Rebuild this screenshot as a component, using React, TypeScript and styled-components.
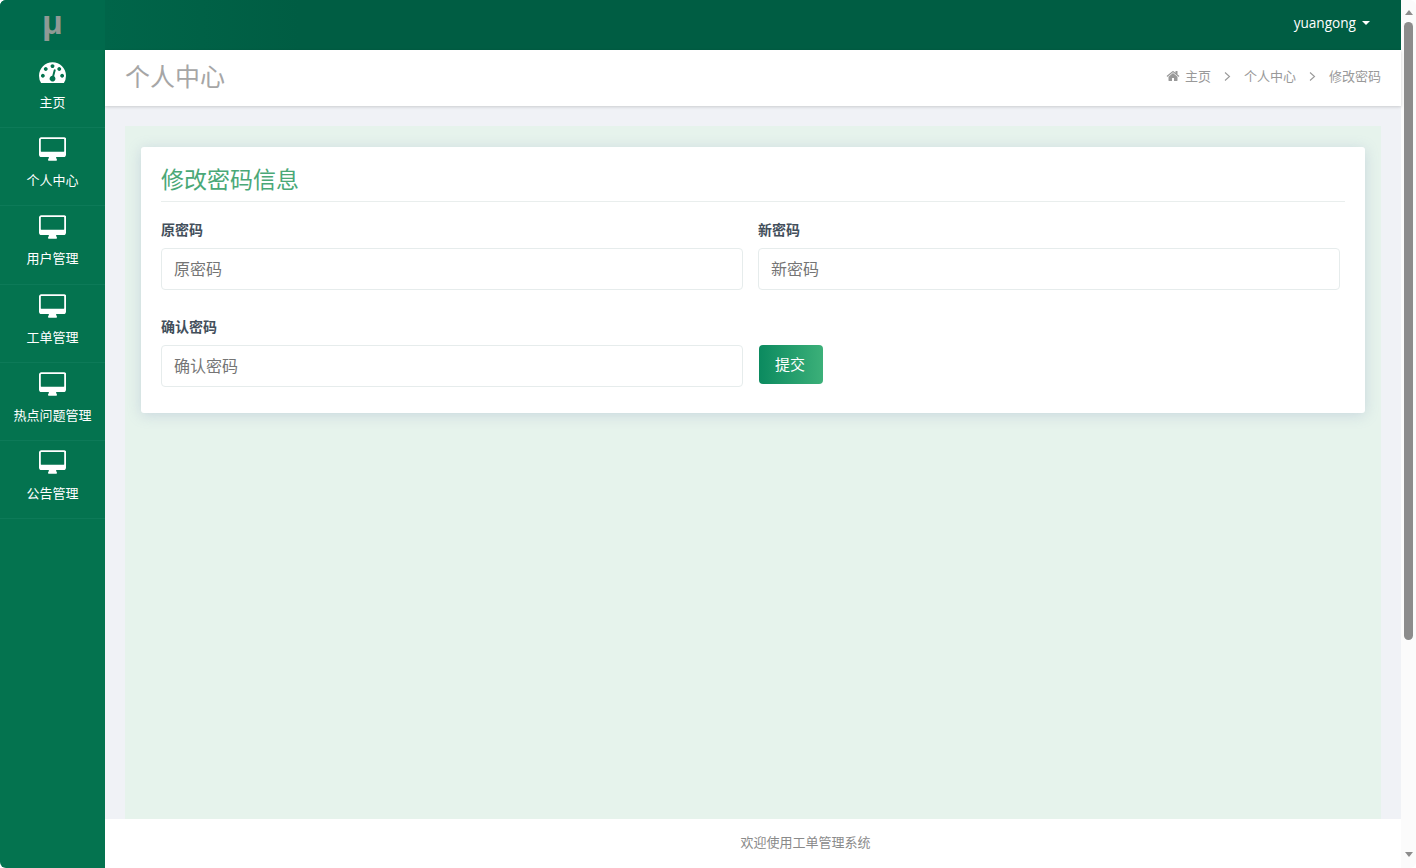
import React from 'react';
import styled, { createGlobalStyle } from 'styled-components';

const GlobalStyle = createGlobalStyle`
  html, body {
    margin: 0;
    padding: 0;
    height: 100%;
    overflow: hidden;
    background: #ffffff;
    font-family: "Open Sans", "Noto Sans CJK SC", sans-serif;
  }
  * {
    box-sizing: border-box;
  }
`;

const Shell = styled.div`
  display: flex;
  height: 868px;
  border-radius: 6px;
  overflow: hidden;
`;

const Sidebar = styled.aside`
  width: 105px;
  flex-shrink: 0;
  background: #04734f;
`;

const Logo = styled.div`
  height: 50px;
  display: flex;
  align-items: center;
  justify-content: center;
  padding-bottom: 5px;
  background: #006a4c;
  color: #8f9a95;
  font-family: "Liberation Sans", sans-serif;
  font-size: 34px;
  font-weight: 700;
`;

const NavItem = styled.a`
  display: flex;
  flex-direction: column;
  align-items: center;
  height: 78.2px;
  padding-top: 9px;
  border-bottom: 1px solid #0d7a58;
  color: #ffffff;
  font-size: 13px;
  line-height: 18px;
  white-space: nowrap;
`;

const NavIcon = styled.svg`
  display: block;
  width: 27px;
  height: 24px;
  margin-bottom: 10px;
  fill: #ffffff;
`;

const Main = styled.div`
  flex: 1;
  min-width: 0;
  display: flex;
  flex-direction: column;
  background: #f0f2f6;
`;

const TopBar = styled.header`
  height: 50px;
  flex-shrink: 0;
  display: flex;
  align-items: center;
  justify-content: flex-end;
  padding: 0 31px 5px 0;
  background: linear-gradient(90deg, #006549 0%, #005d43 15%);
  color: #ffffff;
  font-size: 13.6px;
`;

const UserName = styled.span`
  display: flex;
  align-items: center;
  gap: 6px;
`;

const Caret = styled.i`
  width: 0;
  height: 0;
  border-left: 4px solid transparent;
  border-right: 4px solid transparent;
  border-top: 4px solid #ffffff;
`;

const PageHeader = styled.div`
  height: 56px;
  flex-shrink: 0;
  display: flex;
  align-items: center;
  justify-content: space-between;
  padding: 0 20px 4px;
  background: #ffffff;
  box-shadow: 0 1px 3px rgba(0, 0, 0, 0.16);
  position: relative;
`;

const PageTitle = styled.h1`
  margin: 0;
  color: #a6a6a6;
  font-size: 25px;
  font-weight: 400;
  line-height: 34px;
`;

const Breadcrumb = styled.nav`
  display: flex;
  align-items: center;
  padding-bottom: 2px;
  color: #999999;
  font-size: 13px;
`;

const HomeIcon = styled.svg`
  width: 14px;
  height: 14px;
  margin: 2px 5px 0 1px;
  fill: #999999;
`;

const Chevron = styled.svg`
  width: 7px;
  height: 9px;
  margin: 3px 13px 0;
  fill: none;
  stroke: #999999;
  stroke-width: 1.1;
`;

const Content = styled.main`
  flex: 1;
  margin: 20px 20px 0;
  padding: 21px 16px 0;
  background: #e6f3ec;
`;

const Card = styled.section`
  height: 266px;
  padding: 14px 20px 0;
  background: #ffffff;
  border-radius: 3px;
  box-shadow: 0 2px 14px rgba(130, 150, 190, 0.3);
`;

const CardTitle = styled.h2`
  margin: 0 0 18px;
  height: 41px;
  border-bottom: 1px solid #e9eeed;
  color: #4aa877;
  font-size: 23px;
  font-weight: 400;
  line-height: 36px;
`;

const FormGrid = styled.form`
  display: grid;
  grid-template-columns: 582px 582px;
  column-gap: 15px;
  row-gap: 27px;
  align-items: end;
`;

const Field = styled.label`
  display: block;
`;

const FieldLabel = styled.span`
  display: block;
  margin-bottom: 8px;
  color: #434f5b;
  font-size: 14px;
  font-weight: 700;
  line-height: 20px;
`;

const TextInput = styled.input`
  display: block;
  width: 100%;
  height: 42px;
  padding: 0 12px;
  border: 1px solid #e6ecec;
  border-radius: 4px;
  background: #ffffff;
  color: #555555;
  font-family: inherit;
  font-size: 16px;
  outline: none;

  &::placeholder {
    color: #757575;
    opacity: 1;
  }
`;

const SubmitButton = styled.button`
  width: 64px;
  height: 39px;
  margin: 0 0 3px 1px;
  padding: 0 2px 2px 0;
  border: none;
  border-radius: 4px;
  background: linear-gradient(90deg, #0b8a5f 0%, #3cb079 100%);
  color: #ffffff;
  font-family: inherit;
  font-size: 15px;
`;

const Footer = styled.footer`
  height: 49px;
  flex-shrink: 0;
  display: flex;
  align-items: center;
  justify-content: center;
  padding: 0 0 4px 105px;
  background: #ffffff;
  color: #8a8a8a;
  font-size: 13px;
`;

const Scrollbar = styled.div`
  width: 15px;
  flex-shrink: 0;
  display: flex;
  flex-direction: column;
  align-items: center;
  background: #fbfbfb;
`;

const ScrollArrow = styled.i<{ $down?: boolean }>`
  width: 0;
  height: 0;
  margin: ${({ $down }) => ($down ? 'auto 0 11px' : '10px 0 7px')};
  border-left: 4.5px solid transparent;
  border-right: 4.5px solid transparent;
  border-${({ $down }) => ($down ? 'top' : 'bottom')}: 5px solid #8c8c8c;
`;

const ScrollThumb = styled.div`
  width: 9px;
  height: 618px;
  border-radius: 5px;
  background: #8c8c8c;
`;

const dashboardPath =
  'M384 1216q0-53-37.5-90.5t-90.5-37.5-90.5 37.5-37.5 90.5 37.5 90.5 90.5 37.5 90.5-37.5 37.5-90.5zm192-448q0-53-37.5-90.5t-90.5-37.5-90.5 37.5-37.5 90.5 37.5 90.5 90.5 37.5 90.5-37.5 37.5-90.5zm428 481l101-382q6-26-7.5-48.5t-38.5-29.5-48 6.5-30 39.5l-101 382q-60 5-107 43.5t-63 98.5q-20 77 20 146t117 89 146-20 89-117q16-60-6-117t-72-91zm660-33q0-53-37.5-90.5t-90.5-37.5-90.5 37.5-37.5 90.5 37.5 90.5 90.5 37.5 90.5-37.5 37.5-90.5zm-640-640q0-53-37.5-90.5t-90.5-37.5-90.5 37.5-37.5 90.5 37.5 90.5 90.5 37.5 90.5-37.5 37.5-90.5zm448 192q0-53-37.5-90.5t-90.5-37.5-90.5 37.5-37.5 90.5 37.5 90.5 90.5 37.5 90.5-37.5 37.5-90.5zm320 448q0 261-141 483-19 29-54 29h-1402q-35 0-54-29-141-221-141-483 0-182 71-348t191-286 286-191 348-71 348 71 286 191 191 286 71 348z';
const desktopPath =
  'M1792 992v-832q0-13-9.5-22.5t-22.5-9.5h-1600q-13 0-22.5 9.5t-9.5 22.5v832q0 13 9.5 22.5t22.5 9.5h1600q13 0 22.5-9.5t9.5-22.5zm128-832v1088q0 66-47 113t-113 47h-544q0 37 16 77.5t32 71 16 43.5q0 26-19 45t-45 19h-512q-26 0-45-19t-19-45q0-14 16-44t32-70 16-78h-544q-66 0-113-47t-47-113v-1088q0-66 47-113t113-47h1632q66 0 113 47t47 113z';
const homePath =
  'M1472 992v480q0 26-19 45t-45 19h-384v-384h-256v384h-384q-26 0-45-19t-19-45v-480q0-1 .5-3t.5-3l575-474 575 474q1 2 1 6zm223-69l-62 74q-8 9-21 11h-3q-13 0-21-7l-692-577-692 577q-12 8-24 7-13-2-21-11l-62-74q-8-10-7-23.5t11-21.5l719-599q32-26 76-26t76 26l244 204v-195q0-14 9-23t23-9h192q14 0 23 9t9 23v408l219 182q10 8 11 21.5t-7 23.5z';

const navItems = [
  { label: '主页', home: true },
  { label: '个人中心' },
  { label: '用户管理' },
  { label: '工单管理' },
  { label: '热点问题管理' },
  { label: '公告管理' },
];

const BreadcrumbChevron = () => (
  <Chevron viewBox="0 0 7 9">
    <path d="M1 0.5 L5.5 4.5 L1 8.5" />
  </Chevron>
);

const App: React.FC = () => {
  return (
    <Shell>
      <GlobalStyle />
      <Sidebar>
        <Logo>μ</Logo>
        {navItems.map((item) => (
          <NavItem key={item.label}>
            {item.home ? (
              <NavIcon viewBox="0 200 1792 1400">
                <path d={dashboardPath} />
              </NavIcon>
            ) : (
              <NavIcon viewBox="0 0 1920 1664">
                <path d={desktopPath} />
              </NavIcon>
            )}
            {item.label}
          </NavItem>
        ))}
      </Sidebar>
      <Main>
        <TopBar>
          <UserName>
            yuangong
            <Caret />
          </UserName>
        </TopBar>
        <PageHeader>
          <PageTitle>个人中心</PageTitle>
          <Breadcrumb>
            <HomeIcon viewBox="0 0 1792 1792">
              <path d={homePath} />
            </HomeIcon>
            主页
            <BreadcrumbChevron />
            个人中心
            <BreadcrumbChevron />
            修改密码
          </Breadcrumb>
        </PageHeader>
        <Content>
          <Card>
            <CardTitle>修改密码信息</CardTitle>
            <FormGrid>
              <Field>
                <FieldLabel>原密码</FieldLabel>
                <TextInput placeholder="原密码" />
              </Field>
              <Field>
                <FieldLabel>新密码</FieldLabel>
                <TextInput placeholder="新密码" />
              </Field>
              <Field>
                <FieldLabel>确认密码</FieldLabel>
                <TextInput placeholder="确认密码" />
              </Field>
              <div>
                <SubmitButton type="button">提交</SubmitButton>
              </div>
            </FormGrid>
          </Card>
        </Content>
        <Footer>欢迎使用工单管理系统</Footer>
      </Main>
      <Scrollbar>
        <ScrollArrow />
        <ScrollThumb />
        <ScrollArrow $down />
      </Scrollbar>
    </Shell>
  );
};

export default App;
